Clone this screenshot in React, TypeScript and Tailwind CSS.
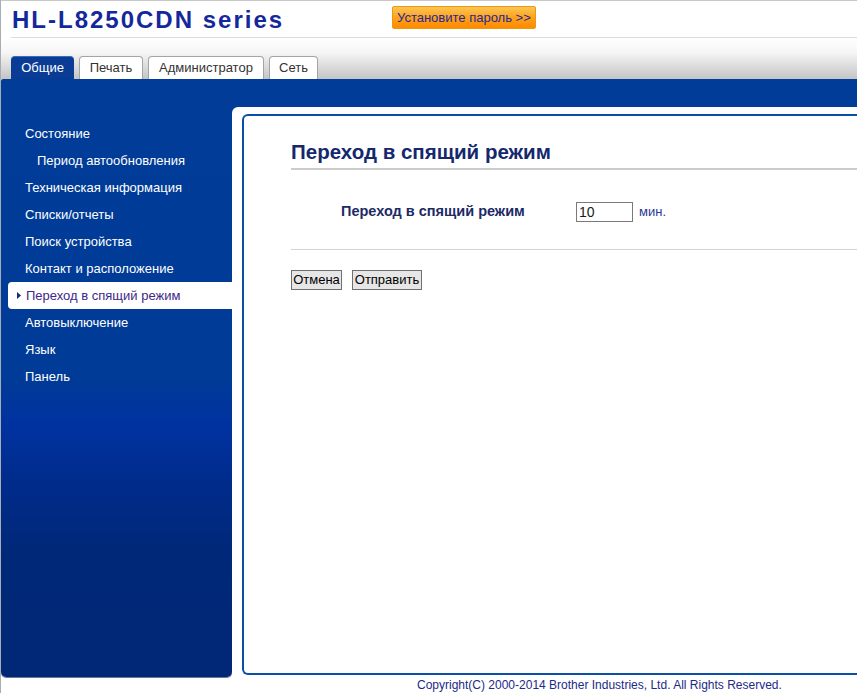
import React from "react";

const menu = [
  { label: "Состояние" },
  { label: "Период автообновления", indent: true },
  { label: "Техническая информация" },
  { label: "Списки/отчеты" },
  { label: "Поиск устройства" },
  { label: "Контакт и расположение" },
  { label: "Переход в спящий режим", active: true },
  { label: "Автовыключение" },
  { label: "Язык" },
  { label: "Панель" },
];

export default function App() {
  return (
    <div className="w-[857px] h-[693px] overflow-hidden bg-white border-l border-[#a8acb4] font-['Liberation_Sans',Arial,sans-serif] text-[13px]">
      {/* Header */}
      <div className="h-[79px] flex flex-col">
        <div className="h-[37px] border-t border-[#c8c8c8] flex items-start">
          <div className="w-[391px] shrink-0 pl-[11px] pt-[5px] leading-[28px] text-[24px] font-bold tracking-[2px] text-[#14289c] whitespace-nowrap">
            HL-L8250CDN series
          </div>
          <div className="mt-[5px] h-[23px] w-[144px] shrink-0 rounded-[2px] border border-[#e59a10] bg-[linear-gradient(to_bottom,#fcc655,#ffa21a_50%,#ff8a00)] text-[13px] leading-[21px] text-[#1b2aa0] pl-[4px] whitespace-nowrap">
            Установите пароль &gt;&gt;
          </div>
        </div>
        <div className="h-[42px] ml-[10px] border-t border-[#dcdcdc] relative">
          <div className="absolute inset-0 -left-[10px] bg-[linear-gradient(to_bottom,#ffffff_0%,#f6f6f6_35%,#c4c4c4_100%)]" />
          <div className="relative h-full flex items-end gap-[5px]">
            <div className="h-[23px] w-[63px] rounded-t-[4px] bg-[#0a3c96] border-t border-[#3a6ab8] text-white text-center leading-[22px]">
              Общие
            </div>
            <div className="h-[23px] w-[64px] rounded-t-[4px] bg-white border border-b-0 border-[#a4a4a4] text-[#333] text-center leading-[21px]">
              Печать
            </div>
            <div className="h-[23px] w-[116px] rounded-t-[4px] bg-white border border-b-0 border-[#a4a4a4] text-[#333] text-center leading-[21px]">
              Администратор
            </div>
            <div className="h-[23px] w-[49px] rounded-t-[4px] bg-white border border-b-0 border-[#a4a4a4] text-[#333] text-center leading-[21px]">
              Сеть
            </div>
          </div>
        </div>
      </div>

      {/* Body */}
      <div className="flex items-start">
        {/* Sidebar */}
        <div className="w-[231px] shrink-0 h-[598px] rounded-b-[5px] rounded-tl-[2px] shadow-[0_1px_0_#6a7a96] bg-[linear-gradient(to_bottom,#003c98_0%,#003b97_50%,#0032a0_58%,#002b8a_68%,#002878_80%,#002876_100%)] pt-[41px]">
          {menu.map((m) =>
            m.active ? (
              <div
                key={m.label}
                className="ml-[7px] h-[27px] rounded-l-[4px] bg-white flex items-center pl-[9px] text-[#40288a] whitespace-nowrap"
              >
                <svg width="4" height="7" viewBox="0 0 4 7" className="mr-[5px]">
                  <path d="M0 0 L4 3.5 L0 7 Z" fill="#1a2a78" />
                </svg>
                {m.label}
              </div>
            ) : (
              <div
                key={m.label}
                className={
                  m.indent
                    ? "h-[27px] leading-[27px] pl-[36px] text-white whitespace-nowrap"
                    : "h-[27px] leading-[27px] pl-[24px] text-white whitespace-nowrap"
                }
              >
                {m.label}
              </div>
            )
          )}
        </div>

        {/* Main column */}
        <div className="flex-1 min-w-0 h-[614px] flex flex-col">
          <div className="h-[28px] bg-[#003c98]" />
          <div className="flex-1 bg-[#003c98]">
            <div className="h-full bg-white rounded-tl-[6px] flex flex-col">
              <div className="ml-[10px] mt-[7px] h-[561px] w-[700px] border-2 border-r-0 border-[#0a4ea6] rounded-l-[6px] pl-[47px] pt-[23px]">
                <h2 className="text-[20.5px] leading-[25px] font-bold text-[#14286e] whitespace-nowrap">
                  Переход в спящий режим
                </h2>
                <div className="mt-[4px] h-[2px] bg-[#cccccc]" />
                <div className="mt-[32px] flex items-center h-[20px]">
                  <div className="w-[285px] pl-[50px] text-[14.5px] font-bold text-[#1c2a66] whitespace-nowrap">
                    Переход в спящий режим
                  </div>
                  <div className="w-[57px] h-[20px] border border-[#7a7a7a] bg-white pl-[2px] leading-[18px] text-[14px] text-[#1a1a1a]">
                    10
                  </div>
                  <div className="ml-[6px] text-[#2a3a96]">мин.</div>
                </div>
                <div className="mt-[27px] h-px bg-[#d4d4d4]" />
                <div className="mt-[20px] flex gap-[10px]">
                  <div className="h-[20px] w-[51px] border border-[#707070] bg-[#e6e6e6] text-black text-center leading-[18px]">
                    Отмена
                  </div>
                  <div className="h-[20px] w-[70px] border border-[#707070] bg-[#e6e6e6] text-black text-center leading-[18px]">
                    Отправить
                  </div>
                </div>
              </div>
              <div className="pl-[185px] pt-[3px] text-[12px] leading-[14px] text-[#1c2a88] whitespace-nowrap">
                Copyright(C) 2000-2014 Brother Industries, Ltd. All Rights Reserved.
              </div>
            </div>
          </div>
        </div>
      </div>
    </div>
  );
}
